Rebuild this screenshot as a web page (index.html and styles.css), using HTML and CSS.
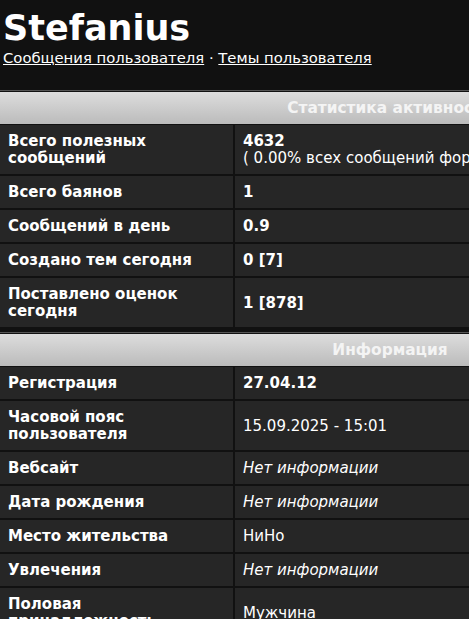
FILE: index.html
```html
<!DOCTYPE html>
<html lang="ru">
<head>
<meta charset="utf-8">
<title>Stefanius</title>
<link rel="stylesheet" href="styles.css">
</head>
<body>
<div class="profile-head">
  <h1 class="username">Stefanius</h1>
  <div class="profile-links">
    <a href="#">Сообщения пользователя</a> · <a href="#">Темы пользователя</a>
  </div>
</div>

<div class="section">
  <table class="info-table">
    <tr><th colspan="2">Статистика активности</th></tr>
    <tr>
      <td class="label">Всего полезных сообщений</td>
      <td class="value"><b>4632</b><br>( 0.00% всех сообщений форума / 0.9 сообщений в день )</td>
    </tr>
    <tr><td class="label">Всего баянов</td><td class="value"><b>1</b></td></tr>
    <tr><td class="label">Сообщений в день</td><td class="value"><b>0.9</b></td></tr>
    <tr><td class="label">Создано тем сегодня</td><td class="value"><b>0 [7]</b></td></tr>
    <tr><td class="label">Поставлено оценок сегодня</td><td class="value"><b>1 [878]</b></td></tr>
  </table>
</div>

<div class="section">
  <table class="info-table">
    <tr><th colspan="2">Информация</th></tr>
    <tr><td class="label">Регистрация</td><td class="value"><b>27.04.12</b></td></tr>
    <tr><td class="label">Часовой пояс пользователя</td><td class="value">15.09.2025 - 15:01</td></tr>
    <tr><td class="label">Вебсайт</td><td class="value"><i>Нет информации</i></td></tr>
    <tr><td class="label">Дата рождения</td><td class="value"><i>Нет информации</i></td></tr>
    <tr><td class="label">Место жительства</td><td class="value">НиНо</td></tr>
    <tr><td class="label">Увлечения</td><td class="value"><i>Нет информации</i></td></tr>
    <tr><td class="label">Половая принадлежность</td><td class="value">Мужчина</td></tr>
  </table>
</div>
</body>
</html>
```

FILE: styles.css
```css
html, body {
  margin: 0;
  padding: 0;
  background: #111111;
  color: #ffffff;
  font-family: "DejaVu Sans", Verdana, sans-serif;
  font-size: 15px;
}

.profile-head {
  padding: 8px 3px 22px;
}

.username {
  margin: 0;
  font-size: 35px;
  line-height: 40px;
  font-weight: bold;
}

.profile-links {
  font-size: 14.8px;
  line-height: 20px;
}

.profile-links a {
  color: #ffffff;
  text-decoration: underline;
}

/* each block opens with a thin grey rule above the table */
.section {
  border-top: 1px solid #555555;
  padding-top: 1px;
  margin-bottom: 3px;
  width: 780px;
}

.info-table {
  width: 780px;
  border-collapse: collapse;
  background: #262626;
  border-bottom: 1px solid #111111;
}

.info-table th {
  height: 32px;
  padding: 0 8px;
  background: linear-gradient(#dddddd, #bbbbbb);
  color: #f4f4f4;
  font-size: 15.4px;
  font-weight: bold;
  text-align: center;
  border-bottom: 1px solid #111111;
}

.info-table td {
  border-right: 2px solid #111111;
  border-bottom: 2px solid #111111;
  padding: 8px 8px 7px;
  line-height: 17px;
  vertical-align: middle;
}

.info-table td.label {
  width: 217px;
  font-weight: bold;
}

.info-table td.value {
  white-space: nowrap;
  border-right: none;
}
```
